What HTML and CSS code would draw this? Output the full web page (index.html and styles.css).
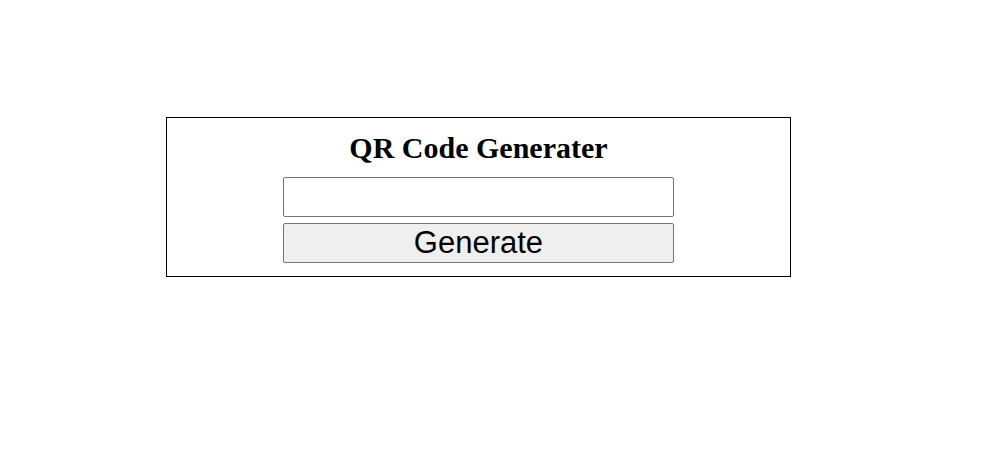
FILE: index.html
```html
<!DOCTYPE html>
<html>
<head>
<meta charset="utf-8">
<title>QR Code Generater</title>
<link rel="stylesheet" href="styles.css">
</head>
<body>
<div class="page">
  <div class="card">
    <h1 class="title">QR Code Generater</h1>
    <div class="form">
      <input class="field" type="text">
      <button class="btn">Generate</button>
    </div>
  </div>
</div>
</body>
</html>
```
FILE: styles.css
```css
html, body {
  margin: 0;
  padding: 0;
  background: #fff;
}
.page {
  padding: 117px 0 0 166px;
}
.card {
  box-sizing: border-box;
  width: 625px;
  border: 1px solid #000;
  padding: 13px 0 13px;
  display: flex;
  flex-direction: column;
  align-items: center;
}
.title {
  margin: 0;
  font-family: "Liberation Serif", "Times New Roman", serif;
  font-size: 30px;
  font-weight: bold;
  line-height: 34px;
  color: #000;
}
.form {
  margin-top: 12px;
  display: flex;
  flex-direction: column;
  gap: 6px;
  width: 391px;
}
.field {
  box-sizing: border-box;
  width: 391px;
  height: 40px;
  margin: 0;
  border: 1px solid #767676;
  border-radius: 2px;
  background: #fff;
  padding: 0 4px;
  font-family: "Liberation Sans", Arial, sans-serif;
  font-size: 20px;
}
.btn {
  box-sizing: border-box;
  width: 391px;
  height: 40px;
  margin: 0;
  border: 1px solid #767676;
  border-radius: 2px;
  background: #efefef;
  color: #000;
  padding: 0;
  font-family: "Liberation Sans", Arial, sans-serif;
  font-size: 31px;
  line-height: 38px;
}
```
